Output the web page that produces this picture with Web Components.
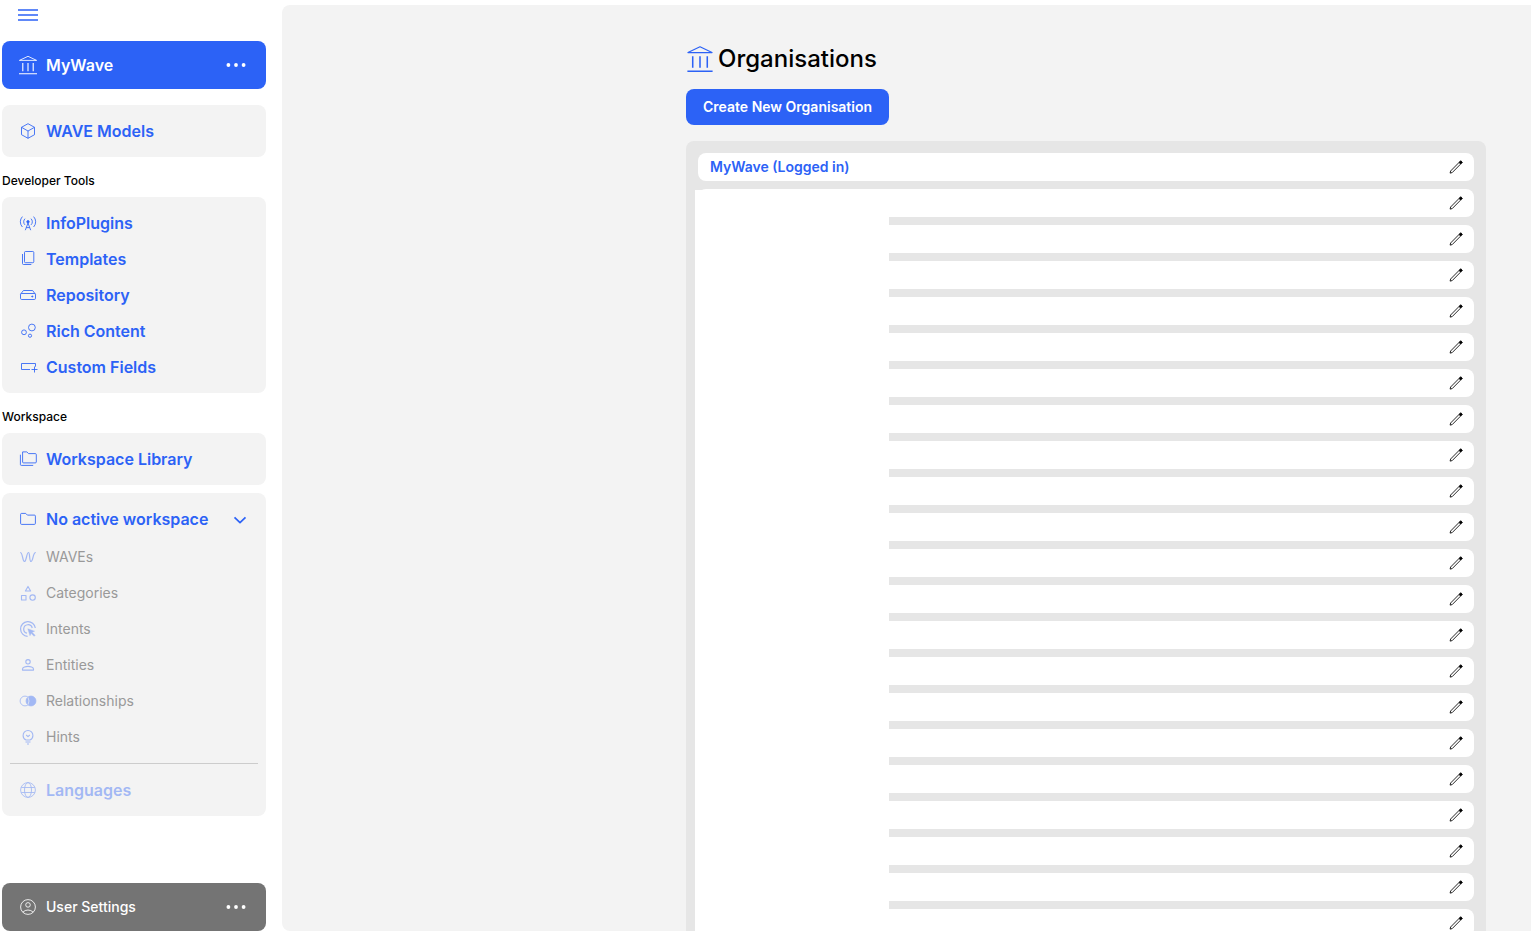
<!DOCTYPE html>
<html lang="en">
<head>
<meta charset="utf-8">
<meta name="viewport" content="width=device-width, initial-scale=1">
<title>Organisations</title>
<style>
    html, body {
        margin: 0;
        height: 100%;
    }
    body {
        --accent: #2c62f6;
        --panel: #f3f3f3;
        --list: #e6e6e6;
        font-family: Inter, "Liberation Sans", sans-serif;
        font-size: 14px;
        line-height: 20px;
        color: #000;
        background: #fff;
        overflow: hidden;
    }
</style>
</head>
<body>
<wave-shell>
    <wave-menu-toggle slot="side"></wave-menu-toggle>
    <wave-bar slot="side" icon="bank">MyWave</wave-bar>
    <wave-card slot="side">
        <wave-item icon="cube">WAVE Models</wave-item>
    </wave-card>
    <wave-card slot="side" title-text="Developer Tools">
        <wave-item icon="antenna">InfoPlugins</wave-item>
        <wave-item icon="copy">Templates</wave-item>
        <wave-item icon="drive">Repository</wave-item>
        <wave-item icon="bubbles">Rich Content</wave-item>
        <wave-item icon="field">Custom Fields</wave-item>
    </wave-card>
    <wave-card slot="side" title-text="Workspace">
        <wave-item icon="folders">Workspace Library</wave-item>
    </wave-card>
    <wave-card slot="side" class="stacked">
        <wave-item icon="folder" expandable>No active workspace</wave-item>
        <wave-group>
            <wave-item icon="wave" minor>WAVEs</wave-item>
            <wave-item icon="shapes" minor>Categories</wave-item>
            <wave-item icon="target" minor>Intents</wave-item>
            <wave-item icon="person" minor>Entities</wave-item>
            <wave-item icon="venn" minor>Relationships</wave-item>
            <wave-item icon="bulb" minor>Hints</wave-item>
        </wave-group>
        <wave-item icon="globe" muted>Languages</wave-item>
    </wave-card>
    <wave-bar slot="footer" icon="user" neutral>User Settings</wave-bar>
    <wave-organisations></wave-organisations>
</wave-shell>

<script>
// all icons are drawn on a 20x20 grid
const ICONS = {
    menu: '<path d="M0 5h20M0 10h20M0 15h20" stroke-width="1.4"/>',
    bank: '<path d="M1.4 5.4 10 1.3l8.6 4.1z"/><path d="M4.8 8v8.2M10 8v8.2M15.2 8v8.2M1 18.8h18" stroke-width="1.1"/>',
    cube: '<path d="M10 2.7 16.5 6.3v7.4L10 17.3 3.5 13.7V6.3zM3.5 6.3 10 10l6.5-3.7M10 10v7.3"/>',
    antenna: '<circle cx="10" cy="8.8" r="1.2" fill="currentColor"/><path d="M10 10 7.3 17.2M10 10l2.7 7.2M8.3 14.6h3.4M7 11.9a4.3 4.3 0 0 1 0-6.2M13 11.9a4.3 4.3 0 0 0 0-6.2M4.4 14a7.6 7.6 0 0 1 0-10.4M15.6 14a7.600 7.600 0 0 0 0-10.400"/>',
    copy: '<rect x="6.5" y="2.5" width="9.3" height="11.200" rx="1"/><path d="M4.500 5v9.500q0 1 1 1h7.800"/>',
    drive: '<path d="M2.500 9.300 5.400 5.500h9.200l2.900 3.800"/><rect x="2.500" y="8.500" width="15" height="6" rx="1.200"/><circle cx="14.300" cy="11.500" r=".6" fill="currentColor"/>',
    bubbles: '<circle cx="13.900" cy="6.500" r="3.400"/><circle cx="6" cy="11.300" r="2.400"/><circle cx="12" cy="14.700" r="1.600"/>',
    field: '<path d="M12 12.500H3.500v-6h14v3.200M16.500 9.500v6M13.500 12.500h6"/>',
    folders: '<path d="M4.600 13V2.900h4.200l1.800 1.700h6.700q1 0 1 1V13q0 .9-1 .9H5.600q-1 0-1-.9zM2.400 5.700v9.800q0 .9 1 .9h11.800"/>',
    folder: '<path d="M2.600 14.400V5.400q0-1 1-1h4.100l1.700 1.700h7q1 0 1 1v7.300q0 1-1 1H3.600q-1 0-1-1z"/>',
    wave: '<path d="M2.200 5.500C4.800 5.500 4.400 14.500 6.400 14.500 8.600 14.500 8.400 5.500 10.600 5.500 12 5.500 11.200 14.500 13 14.500 15.400 14.500 14.600 5.500 17.800 5.500" stroke-width="1.200"/>',
    shapes: '<g stroke-width="1.100"><path d="M10 3.400 12.600 8H7.400z"/><rect x="3.500" y="12.500" width="4.500" height="4.500"/><circle cx="14.600" cy="14.600" r="2.700"/></g>',
    target: '<path d="M9.600 17.400A7.400 7.400 0 1 1 17.300 9M9 14.200A4.300 4.300 0 1 1 14.200 9" stroke-width="1.200"/><path d="m9.800 9.800 6.800 2.400-2.500 1.100 3 3-1 1-3-3-1.100 2.400z" fill="currentColor" stroke-width=".4"/>',
    person: '<g stroke-width="1.100"><circle cx="10" cy="6.800" r="2.200"/><path d="M4.500 15.100v-1.200c0-1.600 3.400-2.500 5.500-2.500s5.500.9 5.500 2.500v1.200z"/></g>',
    venn: '<circle cx="7" cy="10" r="4.900"/><circle cx="13" cy="10" r="4.900" fill="currentColor"/><path d="M10 6.300q2 3.700 0 7.400" stroke="#f3f3f3" stroke-width=".7"/>',
    bulb: '<g stroke-width="1.100"><path d="M8 13c-1.800-.8-2.900-2.500-2.900-4.600a4.900 4.900 0 0 1 9.800 0c0 2.100-1.100 3.800-2.900 4.600zM7.500 15h5M9 17h2M8.200 8 10 9.600 11.800 8"/></g>',
    globe: '<circle cx="10" cy="10" r="7.400"/><ellipse cx="10" cy="10" rx="3.500" ry="7.400"/><path d="M3.200 7.500h13.600M3.200 12.500h13.600"/>',
    user: '<circle cx="10" cy="10" r="7.400"/><circle cx="10" cy="7.900" r="2.300"/><path d="M4.800 15.200q2.200-2.200 5.200-2.200t5.200 2.200"/>',
    dots: '<g fill="currentColor" stroke="none"><circle cx="2.400" cy="10" r="1.900"/><circle cx="10" cy="10" r="1.900"/><circle cx="17.600" cy="10" r="1.900"/></g>',
    chevron: '<path d="m4.500 8.300 5.500 5.300 5.500-5.300" stroke-width="1.700"/>',
    pencil: '<path d="m4.600 14 8.400-8.500 1.600 1.600L6.200 15.600l-2.100.5z"/><path d="m13.200 5.200 1.500-1.500 1.700 1.700-1.500 1.500z" fill="currentColor"/>'
};

class WaveIcon extends HTMLElement {
    connectedCallback() {
        const root = this.attachShadow({mode: 'open'});
        root.innerHTML = `
            <style>
                :host {
                    display: block;
                    flex: none;
                    width: var(--icon-size, 20px);
                    height: var(--icon-size, 20px);
                }
                svg {
                    display: block;
                    width: 100%;
                    height: 100%;
                    fill: none;
                    stroke: currentColor;
                    stroke-width: .85;
                    stroke-linejoin: round;
                }
            </style>
            <svg viewBox="0 0 20 20" aria-hidden="true">${ICONS[this.getAttribute('name')]}</svg>
        `;
    }
}

class WaveShell extends HTMLElement {
    constructor() {
        super();
        this.attachShadow({mode: 'open'}).innerHTML = `
            <style>
                :host {
                    display: grid;
                    grid-template-columns: 264px minmax(0, 1fr);
                    gap: 16px;
                    height: 100vh;
                    padding-left: 2px;
                    box-sizing: border-box;
                }
                nav {
                    display: flex;
                    flex-direction: column;
                    justify-content: space-between;
                    min-height: 0;
                }
                main {
                    margin-top: 5px;
                    min-height: 0;
                    overflow: hidden;
                    border-radius: 8px 0 0 8px;
                    background: var(--panel);
                }
            </style>
            <nav>
                <div><slot name="side"></slot></div>
                <slot name="footer"></slot>
            </nav>
            <main><slot></slot></main>
        `;
    }
}

class WaveMenuToggle extends HTMLElement {
    constructor() {
        super();
        this.attachShadow({mode: 'open'}).innerHTML = `
            <style>
                :host {
                    display: block;
                    padding: 5px 16px 16px;
                    color: var(--accent);
                }
                button {
                    display: block;
                    padding: 0;
                    border: 0;
                    background: none;
                    color: inherit;
                    cursor: pointer;
                }
            </style>
            <button type="button" aria-label="Menu"><wave-icon name="menu"></wave-icon></button>
        `;
    }
}

class WaveBar extends HTMLElement {
    connectedCallback() {
        this.attachShadow({mode: 'open'}).innerHTML = `
            <style>
                :host {
                    display: block;
                }
                button {
                    display: flex;
                    align-items: center;
                    gap: 8px;
                    width: 100%;
                    height: 48px;
                    padding: 0 20px 0 16px;
                    border: 0;
                    border-radius: 8px;
                    background: var(--accent);
                    color: #fff;
                    font: 600 16px/24px Inter, sans-serif;
                    text-align: left;
                    cursor: pointer;
                }
                :host([neutral]) button {
                    background: #747474;
                    font-size: 14px;
                    font-weight: 500;
                }
                span {
                    flex: 1;
                }
            </style>
            <button type="button">
                <wave-icon name="${this.getAttribute('icon')}"></wave-icon>
                <span><slot></slot></span>
                <wave-icon name="dots"></wave-icon>
            </button>
        `;
    }
}

class WaveCard extends HTMLElement {
    connectedCallback() {
        const title = this.getAttribute('title-text');
        this.attachShadow({mode: 'open'}).innerHTML = `
            <style>
                :host {
                    display: block;
                    margin-top: 16px;
                }
                :host([title-text]) {
                    margin-top: 0;
                }
                :host(.stacked) {
                    margin-top: 8px;
                }
                h2 {
                    margin: 0;
                    padding: 16px 0 8px;
                    font-size: 12px;
                    line-height: 16px;
                    font-weight: 500;
                }
                div {
                    padding: 8px;
                    border-radius: 8px;
                    background: var(--panel);
                }
            </style>
            ${title ? `<h2>${title}</h2>` : ''}
            <div><slot></slot></div>
        `;
    }
}

class WaveGroup extends HTMLElement {
    constructor() {
        super();
        this.attachShadow({mode: 'open'}).innerHTML = `
            <style>
                :host {
                    display: block;
                    margin: 2px 0 8px;
                    padding-bottom: 8px;
                    border-bottom: 1px solid #ccc;
                }
            </style>
            <slot></slot>
        `;
    }
}

class WaveItem extends HTMLElement {
    connectedCallback() {
        this.attachShadow({mode: 'open'}).innerHTML = `
            <style>
                :host {
                    display: block;
                }
                a {
                    display: flex;
                    align-items: center;
                    gap: 8px;
                    height: 36px;
                    padding: 0 8px;
                    color: var(--accent);
                    font-size: 16px;
                    font-weight: 600;
                    text-decoration: none;
                }
                span {
                    flex: 1;
                    white-space: nowrap;
                }
                :host([minor]) span {
                    color: #999;
                    font-size: 14px;
                    font-weight: 400;
                }
                :host([minor]) wave-icon, :host([muted]) a {
                    opacity: .4;
                }
            </style>
            <a href="#">
                <wave-icon name="${this.getAttribute('icon')}"></wave-icon>
                <span><slot></slot></span>
                ${this.hasAttribute('expandable') ? '<wave-icon name="chevron"></wave-icon>' : ''}
            </a>
        `;
    }
}

class WaveOrgRow extends HTMLElement {
    constructor() {
        super();
        this.attachShadow({mode: 'open'}).innerHTML = `
            <style>
                :host {
                    display: flex;
                    align-items: center;
                    justify-content: space-between;
                    height: 28px;
                    padding: 0 8px 0 12px;
                    border-radius: 8px;
                    background: #fff;
                    color: var(--accent);
                    font-weight: 600;
                }
                button {
                    padding: 0;
                    border: 0;
                    background: none;
                    color: #000;
                    cursor: pointer;
                }
            </style>
            <span><slot></slot></span>
            <button type="button" aria-label="Edit"><wave-icon name="pencil"></wave-icon></button>
        `;
    }
}

class WaveOrganisations extends HTMLElement {
    constructor() {
        super();
        this.attachShadow({mode: 'open'}).innerHTML = `
            <style>
                :host {
                    display: block;
                    max-width: 800px;
                    margin: 0 45px 0 auto;
                    padding-top: 36px;
                }
                h1 {
                    display: flex;
                    align-items: center;
                    gap: 4px;
                    margin: 0 0 12px;
                    font-size: 24px;
                    line-height: 36px;
                    font-weight: 500;
                }
                h1 wave-icon {
                    --icon-size: 28px;
                    color: var(--accent);
                }
                .create {
                    display: block;
                    height: 36px;
                    padding: 0 17px;
                    border: 0;
                    border-radius: 8px;
                    background: var(--accent);
                    color: #fff;
                    font: 600 14px/20px Inter, sans-serif;
                    cursor: pointer;
                }
                .list {
                    position: relative;
                    display: grid;
                    gap: 8px;
                    margin-top: 16px;
                    padding: 12px;
                    border-radius: 8px;
                    background: var(--list);
                }
                a {
                    color: inherit;
                    text-decoration: none;
                }
                .cover {
                    position: absolute;
                    top: 49px;
                    bottom: 0;
                    left: 9px;
                    width: 194px;
                    background: #fff;
                }
            </style>
            <h1><wave-icon name="bank"></wave-icon>Organisations</h1>
            <button class="create" type="button">Create New Organisation</button>
            <div class="list">
                <wave-org-row><a href="#">MyWave (Logged in)</a></wave-org-row>
                ${'<wave-org-row></wave-org-row>'.repeat(24)}
                <div class="cover"></div>
            </div>
        `;
    }
}

customElements.define('wave-icon', WaveIcon);
customElements.define('wave-shell', WaveShell);
customElements.define('wave-menu-toggle', WaveMenuToggle);
customElements.define('wave-bar', WaveBar);
customElements.define('wave-card', WaveCard);
customElements.define('wave-group', WaveGroup);
customElements.define('wave-item', WaveItem);
customElements.define('wave-org-row', WaveOrgRow);
customElements.define('wave-organisations', WaveOrganisations);
</script>
</body>
</html>
